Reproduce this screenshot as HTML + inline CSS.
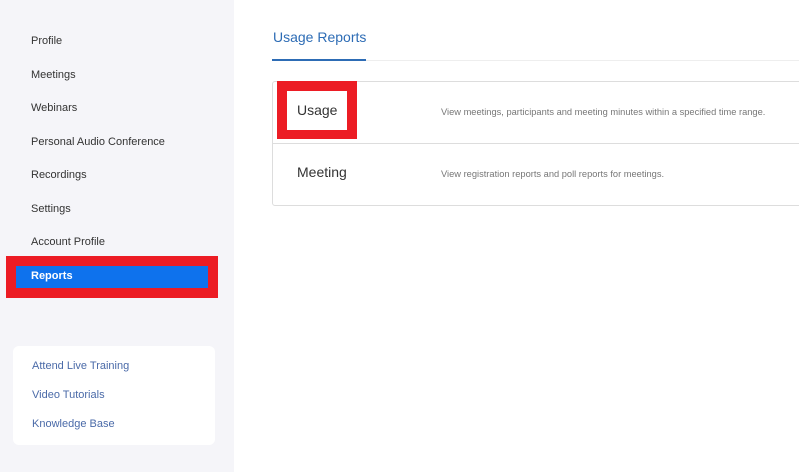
<!DOCTYPE html>
<html><head><style>
body{margin:0;width:799px;height:472px;position:relative;background:#fff;font-family:"Liberation Sans",sans-serif;overflow:hidden}
.side{position:absolute;left:0;top:0;width:234px;height:472px;background:#f5f5f9}
.nav{position:absolute;left:31px;font-size:11px;color:#333}
.help{position:absolute;left:13px;top:346px;width:202px;height:99px;background:#fff;border-radius:6px}
.help div{position:absolute;left:19px;font-size:11px;color:#4a6aa8}
.abs{position:absolute}
</style></head><body>
<div class="side"></div>
<div class="nav" style="top:35px">Profile</div>
<div class="nav" style="top:69px">Meetings</div>
<div class="nav" style="top:102px">Webinars</div>
<div class="nav" style="top:136px">Personal Audio Conference</div>
<div class="nav" style="top:169px">Recordings</div>
<div class="nav" style="top:203px">Settings</div>
<div class="nav" style="top:236px">Account Profile</div>
<div class="abs" style="left:6px;top:256px;width:212px;height:42px;background:#ec1c24"></div>
<div class="abs" style="left:16px;top:266px;width:192px;height:22px;background:#0e72ed"></div>
<div class="nav" style="top:270px;color:#fff;font-weight:bold">Reports</div>
<div class="help"><div style="top:14px">Attend Live Training</div><div style="top:43px">Video Tutorials</div><div style="top:72px">Knowledge Base</div></div>
<div class="abs" style="left:273px;top:29px;font-size:14px;color:#2d6cb5">Usage Reports</div>
<div class="abs" style="left:272px;top:60px;width:527px;height:1px;background:#eee"></div>
<div class="abs" style="left:272px;top:59px;width:94px;height:2px;background:#2d6cb5"></div>
<div class="abs" style="left:272px;top:81px;width:530px;height:125px;border:1px solid #ddd;border-radius:3px;box-sizing:border-box"></div>
<div class="abs" style="left:272px;top:143px;width:527px;height:1px;background:#ddd"></div>
<div class="abs" style="left:277px;top:81px;width:80px;height:58px;background:#ec1c24"></div>
<div class="abs" style="left:287px;top:91px;width:60px;height:39px;background:#fff"></div>
<div class="abs" style="left:297px;top:102px;font-size:14px;color:#333">Usage</div>
<div class="abs" style="left:297px;top:164px;font-size:14px;color:#333">Meeting</div>
<div class="abs" style="left:441px;top:107px;font-size:9.3px;color:#777">View meetings, participants and meeting minutes within a specified time range.</div>
<div class="abs" style="left:441px;top:169px;font-size:9.3px;color:#777">View registration reports and poll reports for meetings.</div>
</body></html>
